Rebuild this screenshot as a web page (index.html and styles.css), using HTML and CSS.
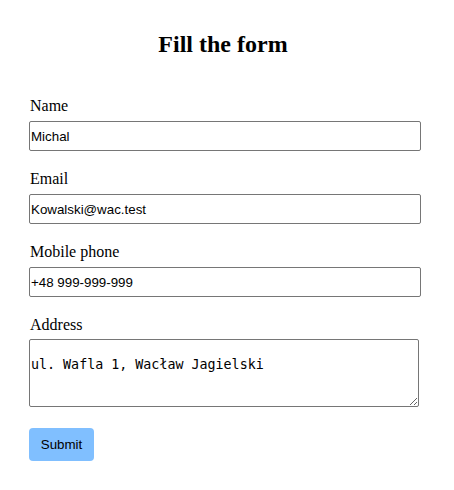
FILE: index.html
```html
<!DOCTYPE html>
<html>
<head>
<meta charset="utf-8">
<link rel="stylesheet" href="styles.css">
</head>
<body>
<div class="page">
  <h2 class="title">Fill the form</h2>
  <form class="form">
    <div class="field">
      <label class="label">Name</label>
      <input class="input" type="text" value="Michal">
    </div>
    <div class="field">
      <label class="label">Email</label>
      <input class="input" type="text" value="Kowalski@wac.test">
    </div>
    <div class="field">
      <label class="label">Mobile phone</label>
      <input class="input" type="text" value="+48 999-999-999">
    </div>
    <div class="field field-area">
      <label class="label">Address</label>
      <textarea class="textarea">

ul. Wafla 1, Wacław Jagielski</textarea>
    </div>
    <button class="submit" type="button">Submit</button>
  </form>
</div>
</body>
</html>
```
FILE: styles.css
```css
html, body {
  margin: 0;
  padding: 0;
  background: #fff;
}
.page {
  font-family: "Liberation Serif", serif;
  color: #000;
  width: 392px;
  margin-left: 29px;
  padding-top: 1px;
}
.title {
  font-size: 24px;
  font-weight: bold;
  text-align: center;
  margin: 29px 0 39px;
  padding-right: 4px;
  line-height: 28px;
}
.form {
  display: flex;
  flex-direction: column;
}
.field {
  display: flex;
  flex-direction: column;
  margin-bottom: 19px;
}
.field-area {
  margin-bottom: 21px;
}
.label {
  font-size: 16px;
  line-height: 18px;
  margin-left: 1px;
  margin-bottom: 6px;
}
.field-area .label {
  margin-bottom: 5px;
}
.input {
  box-sizing: border-box;
  width: 392px;
  height: 30px;
  margin: 0;
  padding: 1px 1px;
  font-family: "Liberation Sans", Arial, sans-serif;
  font-size: 13.33px;
  border: 1px solid #767676;
  border-radius: 2px;
  color: #000;
}
.textarea {
  box-sizing: border-box;
  width: 390px;
  height: 68px;
  margin: 0;
  padding: 2px 1px;
  font-family: "DejaVu Sans Mono", monospace;
  font-size: 13.33px;
  border: 1px solid #767676;
  border-radius: 2px;
  color: #000;
}
.submit {
  align-self: flex-start;
  width: 65px;
  height: 33px;
  margin: 0;
  padding: 0;
  border: none;
  border-radius: 4px;
  background: #80bfff;
  color: #000;
  font-family: "Liberation Sans", Arial, sans-serif;
  font-size: 13.33px;
}
```
